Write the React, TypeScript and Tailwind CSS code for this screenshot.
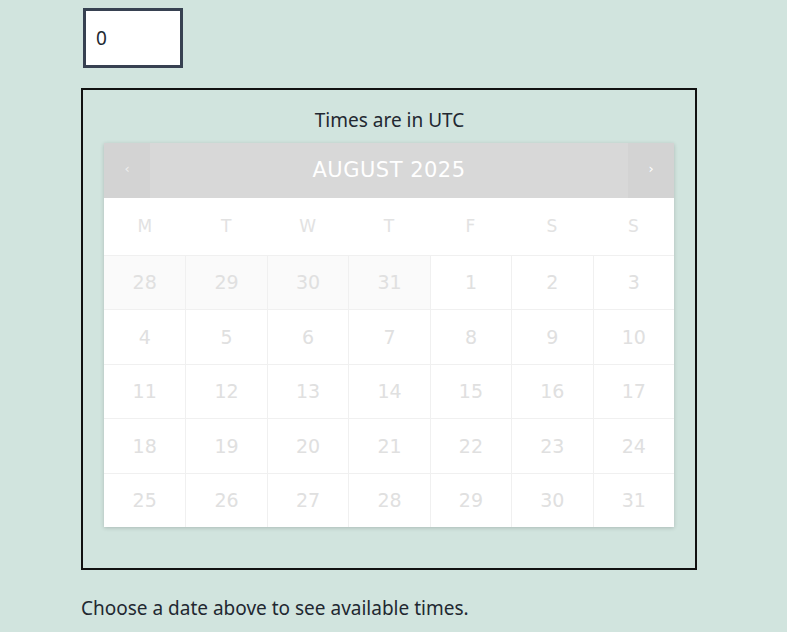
const weeks: { day: number; muted: boolean }[][] = [
  [28, 29, 30, 31].map((d) => ({ day: d, muted: true })).concat([1, 2, 3].map((d) => ({ day: d, muted: false }))),
  [4, 5, 6, 7, 8, 9, 10].map((d) => ({ day: d, muted: false })),
  [11, 12, 13, 14, 15, 16, 17].map((d) => ({ day: d, muted: false })),
  [18, 19, 20, 21, 22, 23, 24].map((d) => ({ day: d, muted: false })),
  [25, 26, 27, 28, 29, 30, 31].map((d) => ({ day: d, muted: false })),
];

const dow = ["M", "T", "W", "T", "F", "S", "S"];

export default function App() {
  return (
    <div className="min-h-[632px] bg-[#d1e4de] pl-[81px] pt-2 font-['Noto_Sans','Open_Sans',sans-serif] text-[#222831]">
      <div className="ml-[2px] flex h-[60px] w-[100px] items-center border-[3px] border-[#374151] bg-white pl-[10px] text-[19px]">
        0
      </div>

      <div className="mt-[20px] flex h-[482px] w-[616px] flex-col border-2 border-[#111] pl-[21px] pr-[20px]">
        <p className="mt-[16px] text-center text-[19px] leading-[28px]">Times are in UTC</p>

        <div className="mt-[9px] w-[570px] bg-white font-['DejaVu_Sans',sans-serif] shadow-[0_1px_4px_rgba(0,0,0,0.18)]">
          <div className="flex h-[55px] items-stretch bg-[#d8d8d8]">
            <div className="flex w-[46px] items-center justify-center bg-[#d3d3d3] pb-[4px] text-[13px] text-[#eeeeee]">‹</div>
            <div className="flex flex-1 items-center justify-center text-[21px] tracking-[0.5px] text-white">AUGUST 2025</div>
            <div className="flex w-[46px] items-center justify-center bg-[#d3d3d3] pb-[4px] text-[13px] text-white">›</div>
          </div>

          <div className="grid h-[57px] grid-cols-7">
            {dow.map((d, i) => (
              <div key={i} className="flex items-center justify-center text-[17px] text-[#e2e2e2]">
                {d}
              </div>
            ))}
          </div>

          {weeks.map((week, wi) => (
            <div key={wi} className="grid h-[54.4px] grid-cols-7 border-t border-[#f0f0f0]">
              {week.map((c, ci) => (
                <div
                  key={ci}
                  className={`flex items-center justify-center text-[19px] text-[#e0e0e0] ${ci > 0 ? "border-l border-[#f0f0f0]" : ""} ${c.muted ? "bg-[#fafafa]" : ""}`}
                >
                  {c.day}
                </div>
              ))}
            </div>
          ))}
        </div>
      </div>

      <p className="mt-[24px] text-[19px] leading-[28px]">Choose a date above to see available times.</p>
    </div>
  );
}
